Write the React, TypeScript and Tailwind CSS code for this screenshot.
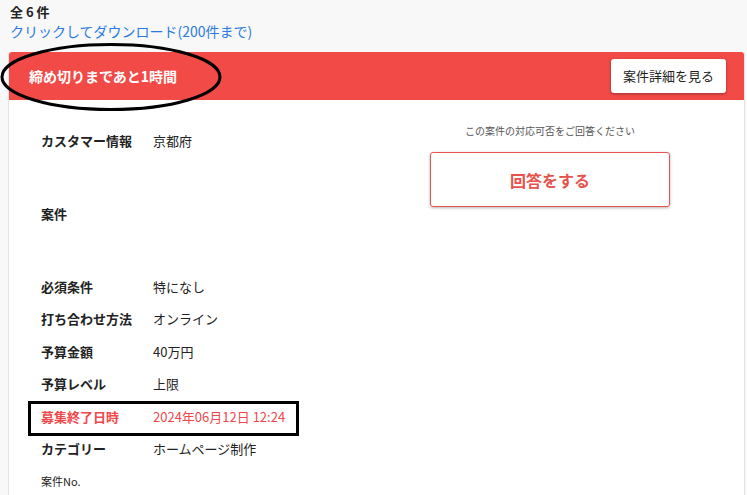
const rows: { label: string; value?: string; extra?: boolean; red?: boolean }[] = [
  { label: "カスタマー情報", value: "京都府", extra: true },
  { label: "案件", extra: true },
  { label: "必須条件", value: "特になし" },
  { label: "打ち合わせ方法", value: "オンライン" },
  { label: "予算金額", value: "40万円" },
  { label: "予算レベル", value: "上限" },
  { label: "募集終了日時", value: "2024年06月12日 12:24", red: true },
  { label: "カテゴリー", value: "ホームページ制作" },
];

export default function App() {
  return (
    <div
      className="relative h-[495px] w-[747px] overflow-hidden bg-[#f8f8f8] text-[#222]"
      style={{ fontFamily: '"Noto Sans CJK JP", "Noto Sans", sans-serif' }}
    >
      <div className="px-[10px] pt-[3px]">
        <div className="text-[13px] font-bold leading-[18px]">全 6 件</div>
        <div className="text-[14px] leading-[20px] text-[#2a7ae2]">クリックしてダウンロード(200件まで)</div>
      </div>

      <div className="mt-[11px] ml-[8px] mr-[2px] rounded-t-[3px] border-x border-[#e4e4e4] bg-white">
        <div className="flex h-[48px] items-center justify-between rounded-t-[3px] bg-[#f24a46] pl-[20px] pr-[18px]">
          <span className="text-[14px] font-bold text-white">締め切りまであと1時間</span>
          <button className="h-[34px] rounded-[3px] bg-white px-[12px] text-[13px] text-[#222] shadow-[0_1px_3px_rgba(0,0,0,0.35)]">
            案件詳細を見る
          </button>
        </div>

        <div className="flex pt-[24px]">
          <div className="flex-1 pl-[32px]">
            {rows.map((r) => (
              <div
                key={r.label}
                className={`flex h-[32.5px] items-center text-[13px] ${r.extra ? "mb-[40.5px]" : ""} ${r.red ? "text-[#f0484a]" : ""}`}
              >
                <span className="w-[112px] font-bold">{r.label}</span>
                <span>{r.value}</span>
              </div>
            ))}
            <div className="flex h-[32px] items-center text-[11px]">案件No.</div>
          </div>

          <div className="mr-[74px] flex w-[240px] flex-col items-center">
            <div className="mt-[-1px] text-[10px] text-[#555]">この案件の対応可否をご回答ください</div>
            <button className="mt-[14px] h-[55px] w-[240px] rounded-[3px] border border-[#e85450] text-[16px] font-bold text-[#e8524c] shadow-[0_1px_3px_rgba(0,0,0,0.3)]">
              回答をする
            </button>
          </div>
        </div>
      </div>

      <svg className="absolute left-0 top-[42px]" width="224" height="70">
        <ellipse cx="111" cy="35" rx="109" ry="32.5" fill="none" stroke="#000" strokeWidth="3" />
      </svg>
      <div className="absolute left-[28px] top-[401px] h-[35px] w-[271px] border-[3px] border-black" />
    </div>
  );
}
